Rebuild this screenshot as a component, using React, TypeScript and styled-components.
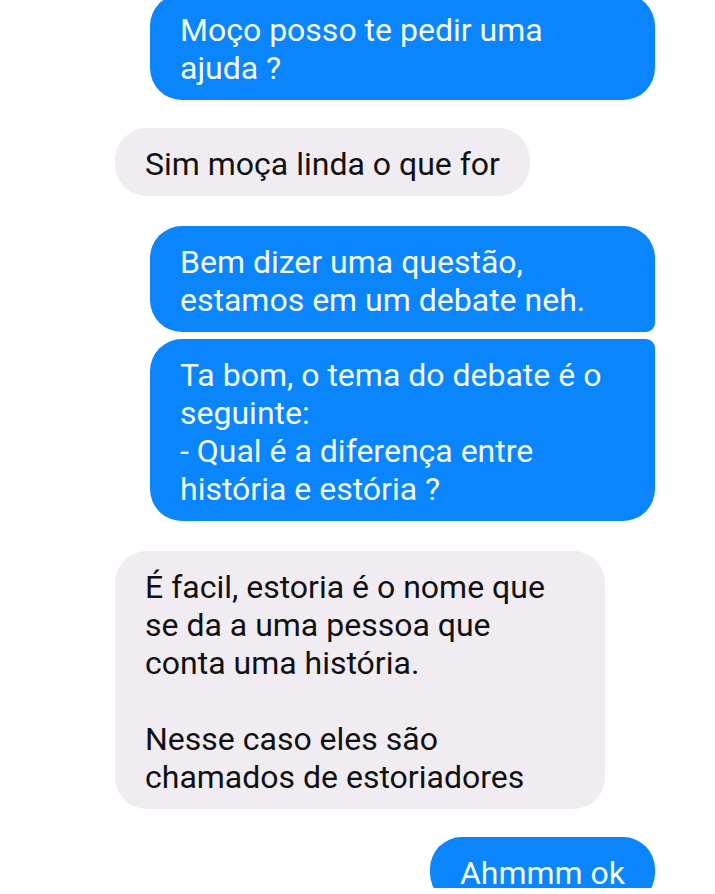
import React from 'react'
import styled, { createGlobalStyle, css } from 'styled-components'

const GlobalStyle = createGlobalStyle`
  html, body {
    margin: 0;
    padding: 0;
    background: #ffffff;
    overflow: hidden;
  }
  body {
    font-family: Roboto, "Noto Sans", Arial, sans-serif;
  }
`

const Thread = styled.div`
  display: flex;
  flex-direction: column;
  width: 715px;
  height: 894px;
  box-sizing: border-box;
  padding: 0 60px 0 115px;
  margin-top: -6px;
  overflow: hidden;
`

type Side = 'me' | 'them'
type Corner = 'single' | 'first' | 'last'

const Bubble = styled.div<{
  $side: Side
  $corner?: Corner
  $width?: number
  $gap?: number
}>`
  box-sizing: border-box;
  flex: none;
  margin-top: ${({ $gap }) => ($gap ?? 0)}px;
  padding: 17px 30px 13px 30px;
  border-radius: 32px;
  font-size: 32px;
  line-height: 38px;
  white-space: nowrap;
  ${({ $width }) => ($width ? `width: ${$width}px;` : '')}

  ${({ $side }) =>
    $side === 'me'
      ? css`
          align-self: flex-end;
          background: #0a85fb;
          color: #f4fbff;
        `
      : css`
          align-self: flex-start;
          background: #f0ecf1;
          color: #111111;
        `}

  ${({ $corner }) =>
    $corner === 'first' &&
    css`
      border-bottom-right-radius: 9px;
    `}
  ${({ $corner }) =>
    $corner === 'last' &&
    css`
      border-top-right-radius: 9px;
    `}
`

type Message = {
  side: Side
  lines: string[]
  width?: number
  gap: number
  corner?: Corner
}

const messages: Message[] = [
  { side: 'me', lines: ['Moço posso te pedir uma', 'ajuda ?'], width: 505, gap: 0 },
  { side: 'them', lines: ['Sim moça linda o que for'], gap: 28 },
  {
    side: 'me',
    lines: ['Bem dizer uma questão,', 'estamos em um debate neh.'],
    width: 505,
    gap: 30,
    corner: 'first',
  },
  {
    side: 'me',
    lines: [
      'Ta bom, o tema do debate é o',
      'seguinte:',
      '- Qual é a diferença entre',
      'história e estória ?',
    ],
    width: 505,
    gap: 7,
    corner: 'last',
  },
  {
    side: 'them',
    lines: [
      'É facil, estoria é o nome que',
      'se da a uma pessoa que',
      'conta uma história.',
      '',
      'Nesse caso eles são',
      'chamados de estoriadores',
    ],
    width: 490,
    gap: 30,
  },
  { side: 'me', lines: ['Ahmmm ok'], gap: 28 },
]

export default function App() {
  return (
    <>
      <GlobalStyle />
      <Thread>
        {messages.map((m, i) => (
          <Bubble key={i} $side={m.side} $width={m.width} $gap={m.gap} $corner={m.corner}>
            {m.lines.map((line, j) => (
              <React.Fragment key={j}>
                {j > 0 && <br />}
                {line === '' ? '\u00a0' : line}
              </React.Fragment>
            ))}
          </Bubble>
        ))}
      </Thread>
    </>
  )
}
